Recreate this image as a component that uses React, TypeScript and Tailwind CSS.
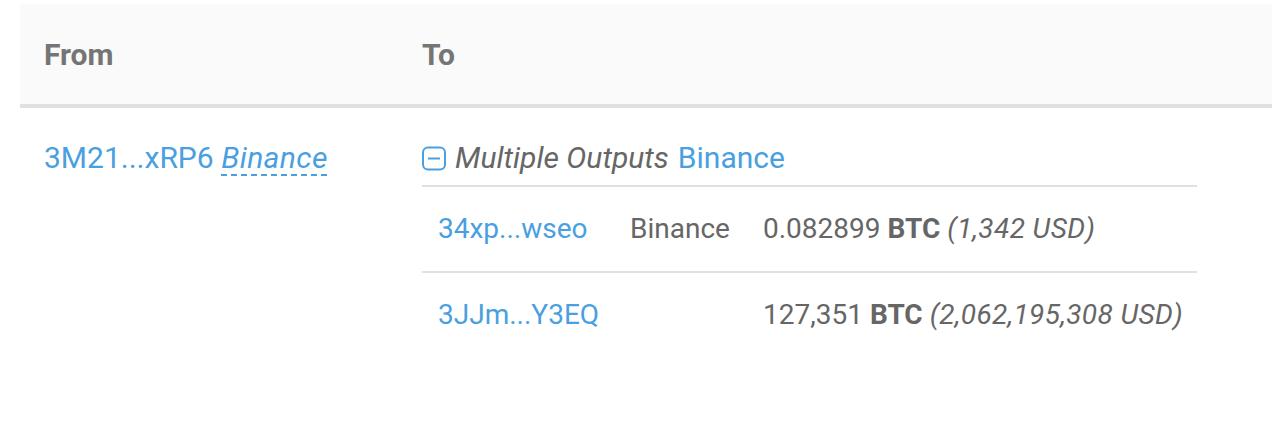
import React from 'react'

function CollapseIcon() {
  return (
    <svg width="24" height="25" viewBox="0 0 24 25" fill="none" className="shrink-0">
      <rect x="1" y="1.5" width="22" height="22" rx="5" stroke="#4a9fe0" strokeWidth="2" />
      <line x1="6" y1="12.5" x2="18" y2="12.5" stroke="#4a9fe0" strokeWidth="2" />
    </svg>
  )
}

const outputs = [
  { addr: '34xp...wseo', label: 'Binance', amount: '0.082899', usd: '1,342' },
  { addr: '3JJm...Y3EQ', label: '', amount: '127,351', usd: '2,062,195,308' },
]

export default function App() {
  return (
    <div className="w-[1272px] h-[430px] bg-white pt-[4px] pl-[20px] font-['Roboto',sans-serif] text-[30px] text-[#666]">
      {/* header */}
      <div className="h-[104px] bg-[#fafafa] border-b-4 border-[#e0e0e0] flex items-center font-bold text-[#757575]">
        <div className="w-[402px] pl-[24px]">From</div>
        <div>To</div>
      </div>

      {/* row */}
      <div className="flex">
        <div className="w-[402px] pl-[24px] pt-[31px] leading-[38px] text-[#4a9fe0]">
          3M21...xRP6{' '}
          <span className="italic tracking-[0.4px] underline decoration-dashed decoration-[1.5px] underline-offset-[6px]">Binance</span>
        </div>
        <div className="w-[775px]">
          <div className="pt-[31px] pb-[8px] flex items-center gap-[9px] leading-[38px]">
            <CollapseIcon />
            <span className="italic">Multiple Outputs</span>
            <span className="text-[#4a9fe0]">Binance</span>
          </div>
          {outputs.map((o) => (
            <div key={o.addr} className="h-[86px] border-t-2 border-[#e0e0e0] grid grid-cols-[192px_133px_1fr] items-center text-[28px] leading-[38px]">
              <div className="pl-[16px] text-[#4a9fe0]">{o.addr}</div>
              <div className="pl-[16px]">{o.label}</div>
              <div className="pl-[16px] whitespace-nowrap">
                {o.amount} <b className="font-bold">BTC</b> <i className="tracking-[0.4px]">({o.usd} USD)</i>
              </div>
            </div>
          ))}
        </div>
      </div>
    </div>
  )
}
